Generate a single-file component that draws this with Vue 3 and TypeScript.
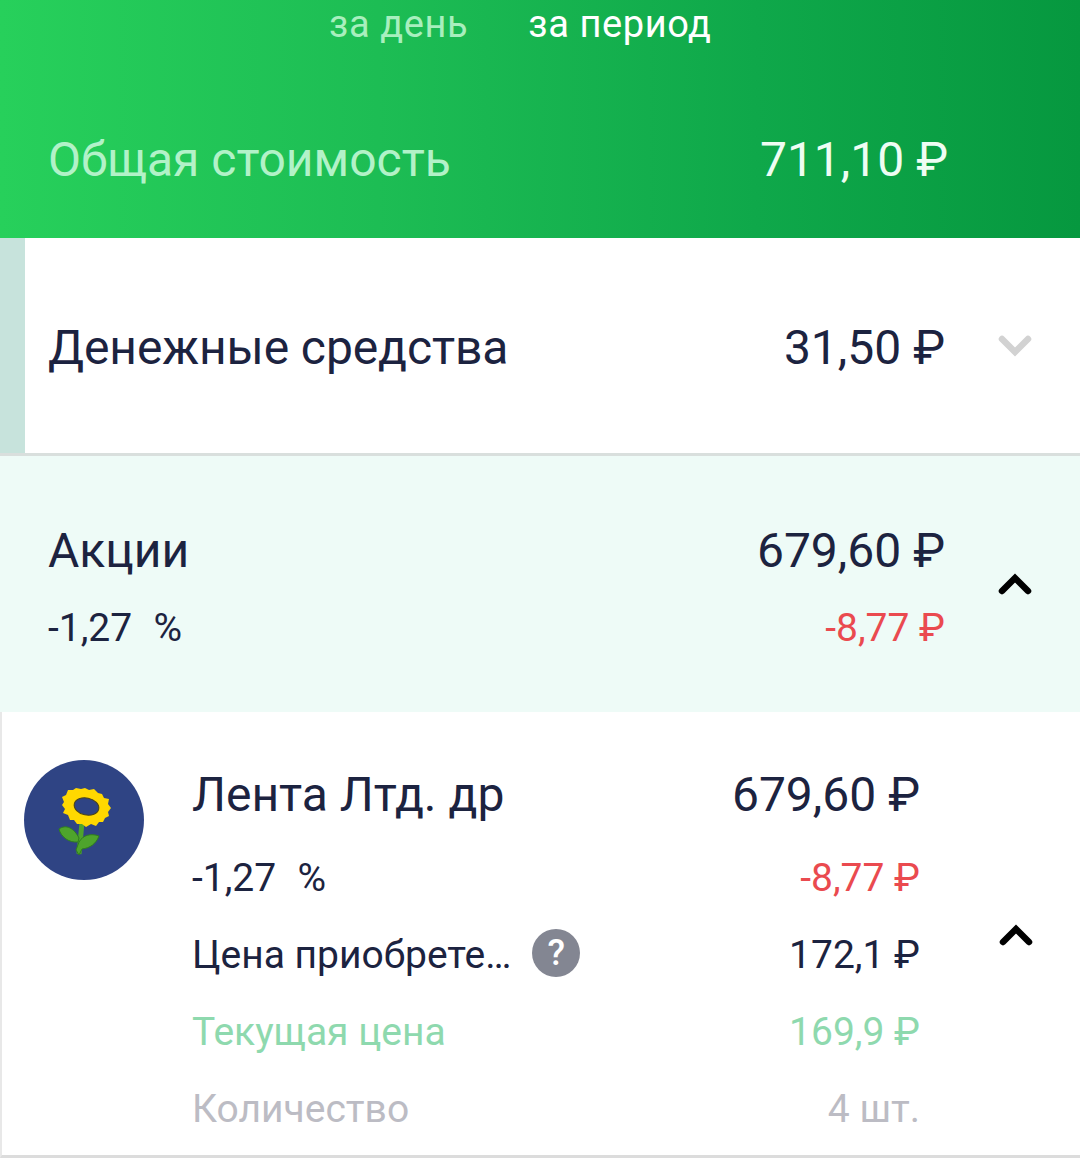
<script setup lang="ts">
const details = [
  { label: 'Текущая цена', value: '169,9 ₽', tone: 'green' },
  { label: 'Количество', value: '4 шт.', tone: 'muted' },
]
</script>

<template>
  <div class="page">
    <header class="hero">
      <nav class="tabs">
        <span class="tab">за день</span>
        <span class="tab tab--active">за период</span>
      </nav>
      <div class="total">
        <span class="total__label">Общая стоимость</span>
        <span class="total__value">711,10 ₽</span>
      </div>
    </header>

    <section class="cash">
      <div class="cash__bar"></div>
      <span class="title grow">Денежные средства</span>
      <span class="title">31,50 ₽</span>
      <svg class="chevron chevron--down" viewBox="0 0 36 24" width="36" height="24">
        <path d="M5 6 L18 19 L31 6" />
      </svg>
    </section>

    <section class="stocks">
      <div class="stocks__body">
        <div class="line">
          <span class="title">Акции</span>
          <span class="title">679,60 ₽</span>
        </div>
        <div class="line line--sub">
          <span class="sub">-1,27&nbsp; <span class="pct">%</span></span>
          <span class="sub red">-8,77 ₽</span>
        </div>
      </div>
      <svg class="chevron chevron--up" viewBox="0 0 36 24" width="36" height="24">
        <path d="M5 19 L18 6 L31 19" />
      </svg>
    </section>

    <section class="item">
      <div class="logo">
        <svg viewBox="0 0 120 120" width="120" height="120">
          <circle cx="60" cy="60" r="60" fill="#2f4484" />
          <path class="stem" d="M58 62 C57 74 56 84 55 94" />
          <path class="leaf" d="M35 69 C42 64 50 68 55 78 L54 82 C45 83 37 77 35 69 Z" />
          <path class="leaf" d="M75 76 C67 73 59 75 55 82 L52 90 L55 95 L58 89 C66 88 72 84 75 76 Z" />
          <path
            class="petals"
            d="M44 30 L49 30 L52 28 L57 29 L61 28 L65 30 L70 29 L74 33 L78 34 L80 38 L85 39 L84 44 L87 48 L84 52 L85 56 L81 58 L79 62 L75 62 L72 66 L67 64 L62 67 L58 64 L53 64 L50 60 L46 60 L44 55 L39 53 L41 49 L38 45 L40 42 L38 37 L42 35 Z"
          />
          <ellipse cx="62.5" cy="46.5" rx="12.5" ry="8.5" transform="rotate(12 62.5 46.5)" fill="#2f4484" stroke="#4a4318" stroke-width="1" />
        </svg>
      </div>

      <div class="item__body">
        <div class="line">
          <span class="title">Лента Лтд. др</span>
          <span class="title">679,60 ₽</span>
        </div>
        <div class="line line--item-sub">
          <span class="sub">-1,27&nbsp; <span class="pct">%</span></span>
          <span class="sub red">-8,77 ₽</span>
        </div>
        <div class="line line--detail line--price">
          <span class="detail-label">
            <span class="sub">Цена приобрете…</span>
            <span class="help">?</span>
          </span>
          <span class="sub">172,1 ₽</span>
        </div>
        <div v-for="row in details" :key="row.label" class="line line--detail" :class="row.tone">
          <span class="sub">{{ row.label }}</span>
          <span class="sub">{{ row.value }}</span>
        </div>
      </div>

      <svg class="chevron chevron--up chevron--item" viewBox="0 0 36 24" width="36" height="24">
        <path d="M5 19 L18 6 L31 19" />
      </svg>
    </section>
  </div>
</template>

<style>
html,
body {
  margin: 0;
  background: #fff;
}
</style>

<style scoped>
.page {
  width: 1080px;
  height: 1169px;
  overflow: hidden;
  background: #fff;
  font-family: Roboto, 'Noto Sans', sans-serif;
  color: #1c2340;
}
.hero {
  height: 238px;
  box-sizing: border-box;
  background: linear-gradient(90deg, #27d05b 0%, #1dbd54 35%, #0fa84a 70%, #06983f 100%);
}
.tabs {
  display: flex;
  gap: 60px;
  padding: 3px 0 0 329px;
  font-size: 38px;
  line-height: 42px;
  letter-spacing: 0.6px;
}
.tab {
  color: #a8efbe;
}
.tab--active {
  color: #fff;
}
.total {
  display: flex;
  justify-content: space-between;
  align-items: baseline;
  padding: 87px 132px 0 48px;
  font-size: 48px;
  line-height: 56px;
}
.total__label {
  color: #b2f2c8;
}
.total__value {
  color: #eefdf3;
}
.title {
  font-size: 48px;
  line-height: 56px;
  color: #1c2340;
}
.grow {
  flex: 1;
  letter-spacing: -0.1px;
}
.sub {
  font-size: 39px;
  line-height: 44px;
}
.pct {
  margin-left: 2px;
}
.red {
  color: #ea4a4f;
}
.cash {
  display: flex;
  align-items: center;
  height: 218px;
  box-sizing: border-box;
  border-bottom: 3px solid #d9dfdd;
  padding: 4px 47px 0 0;
}
.cash__bar {
  width: 25px;
  align-self: stretch;
  margin: -4px 23px 0 0;
  background: #c7e3dc;
}
.chevron {
  flex: none;
  fill: none;
  stroke-width: 6.5;
  stroke-linecap: round;
  stroke-linejoin: miter;
}
.chevron--down {
  stroke: #d2d2d2;
  margin: -6px 0 0 52px;
}
.chevron--up {
  stroke: #000;
}
.stocks {
  display: flex;
  align-items: center;
  height: 256px;
  box-sizing: border-box;
  padding: 0 47px 0 48px;
  background: #eefbf7;
}
.stocks__body {
  flex: 1;
  margin-top: 5px;
}
.stocks .chevron {
  margin-left: 52px;
}
.line {
  display: flex;
  justify-content: space-between;
  align-items: center;
}
.line--sub {
  margin-top: 27px;
}
.item {
  display: flex;
  position: relative;
  height: 446px;
  box-sizing: border-box;
  padding: 55px 0 0 24px;
  border-left: 2px solid #e8e8e8;
  border-bottom: 3px solid #dcdcdc;
}
.logo {
  flex: none;
  width: 120px;
  height: 120px;
  margin: -7px 0 0 -2px;
}
.stem {
  fill: none;
  stroke: #4ea42c;
  stroke-width: 5;
}
.leaf {
  fill: #4ea42c;
  stroke: #2f7d1e;
  stroke-width: 1;
}
.petals {
  fill: #ffd800;
}
.item__body {
  width: 728px;
  margin-left: 48px;
}
.line--item-sub {
  margin-top: 33px;
}
.line--price {
  margin-top: 33px;
}
.line--detail {
  height: 44px;
  margin-bottom: 33px;
}
.detail-label {
  display: flex;
  align-items: center;
  gap: 21px;
}
.help {
  width: 48px;
  height: 48px;
  margin-top: -5px;
  border-radius: 50%;
  background: #838692;
  color: #fff;
  font-size: 36px;
  font-weight: 500;
  line-height: 48px;
  text-align: center;
}
.green .sub {
  color: #8ed9ae;
}
.muted .sub {
  color: #bcbcc4;
}
.chevron--item {
  margin: 156px 0 0 78px;
}
</style>
